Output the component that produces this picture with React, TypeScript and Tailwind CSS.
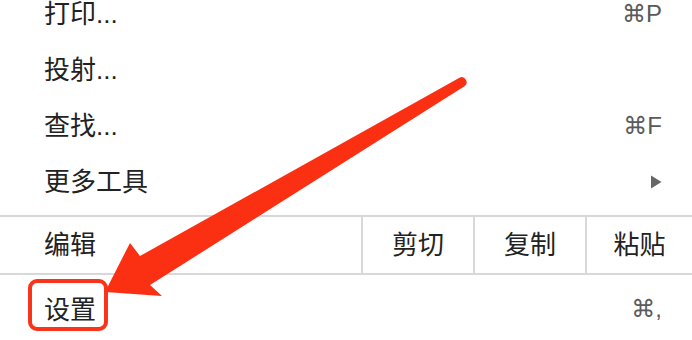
import React from "react";

const FONT = {
  fontFamily: '"Liberation Sans", "Noto Sans CJK SC", sans-serif',
};

function Row({ label, right }: { label: string; right?: React.ReactNode }) {
  return (
    <div className="flex h-[56px] items-center justify-between pl-[44px] pr-[30px]">
      <span className="text-[26px] leading-none text-[#222222]">{label}</span>
      {right}
    </div>
  );
}

function Shortcut({ text }: { text: string }) {
  return (
    <span
      className="text-[24px] leading-none text-[#5a5a5a]"
      style={{ fontFamily: '"Liberation Sans", "DejaVu Sans", sans-serif' }}
    >
      {text}
    </span>
  );
}

function Tri() {
  return (
    <svg width="12" height="14" viewBox="0 0 12 14" className="mr-[0px]">
      <path d="M1 0.5 L11.5 7 L1 13.5 Z" fill="#666666" />
    </svg>
  );
}

export default function App() {
  return (
    <div
      className="relative h-[340px] w-[692px] overflow-hidden bg-white"
      style={FONT}
    >
      <div className="-mt-[14px]">
        <Row label="打印..." right={<Shortcut text="⌘P" />} />
        <Row label="投射..." />
        <Row label="查找..." right={<Shortcut text="⌘F" />} />
        <Row label="更多工具" right={<Tri />} />
      </div>
      <div className="mt-[5px] h-[2px] bg-[#d8d8d8]" />
      <div className="flex h-[56px]">
        <div className="flex flex-1 items-center pl-[44px]">
          <span className="text-[26px] leading-none text-[#222222]">编辑</span>
        </div>
        <div className="flex w-[112px] items-center justify-center border-l-2 border-[#d8d8d8]">
          <span className="text-[26px] leading-none text-[#222222]">剪切</span>
        </div>
        <div className="flex w-[112px] items-center justify-center border-l-2 border-[#d8d8d8]">
          <span className="text-[26px] leading-none text-[#222222]">复制</span>
        </div>
        <div className="flex w-[107px] items-center justify-center border-l-2 border-[#d8d8d8]">
          <span className="text-[26px] leading-none text-[#222222]">粘贴</span>
        </div>
      </div>
      <div className="h-[2px] bg-[#d8d8d8]" />
      <div className="flex h-[66px] items-start justify-between pl-[44px] pr-[30px] pt-[22px]">
        <span className="text-[26px] leading-none text-[#222222]">设置</span>
        <Shortcut text="⌘," />
      </div>

      <div className="absolute left-[28px] top-[279px] h-[52px] w-[80px] rounded-[9px] border-4 border-[#f8341a]" />

      <svg
        className="absolute left-0 top-0"
        width="692"
        height="340"
        viewBox="0 0 692 340"
      >
        <path
          d="M459.5 77.7 L140 256 L130 243 L105 292 L162 296 L150 285 L464.5 86.3 A5 5 0 0 0 459.5 77.7 Z"
          fill="#fb2f12"
        />
      </svg>
    </div>
  );
}
